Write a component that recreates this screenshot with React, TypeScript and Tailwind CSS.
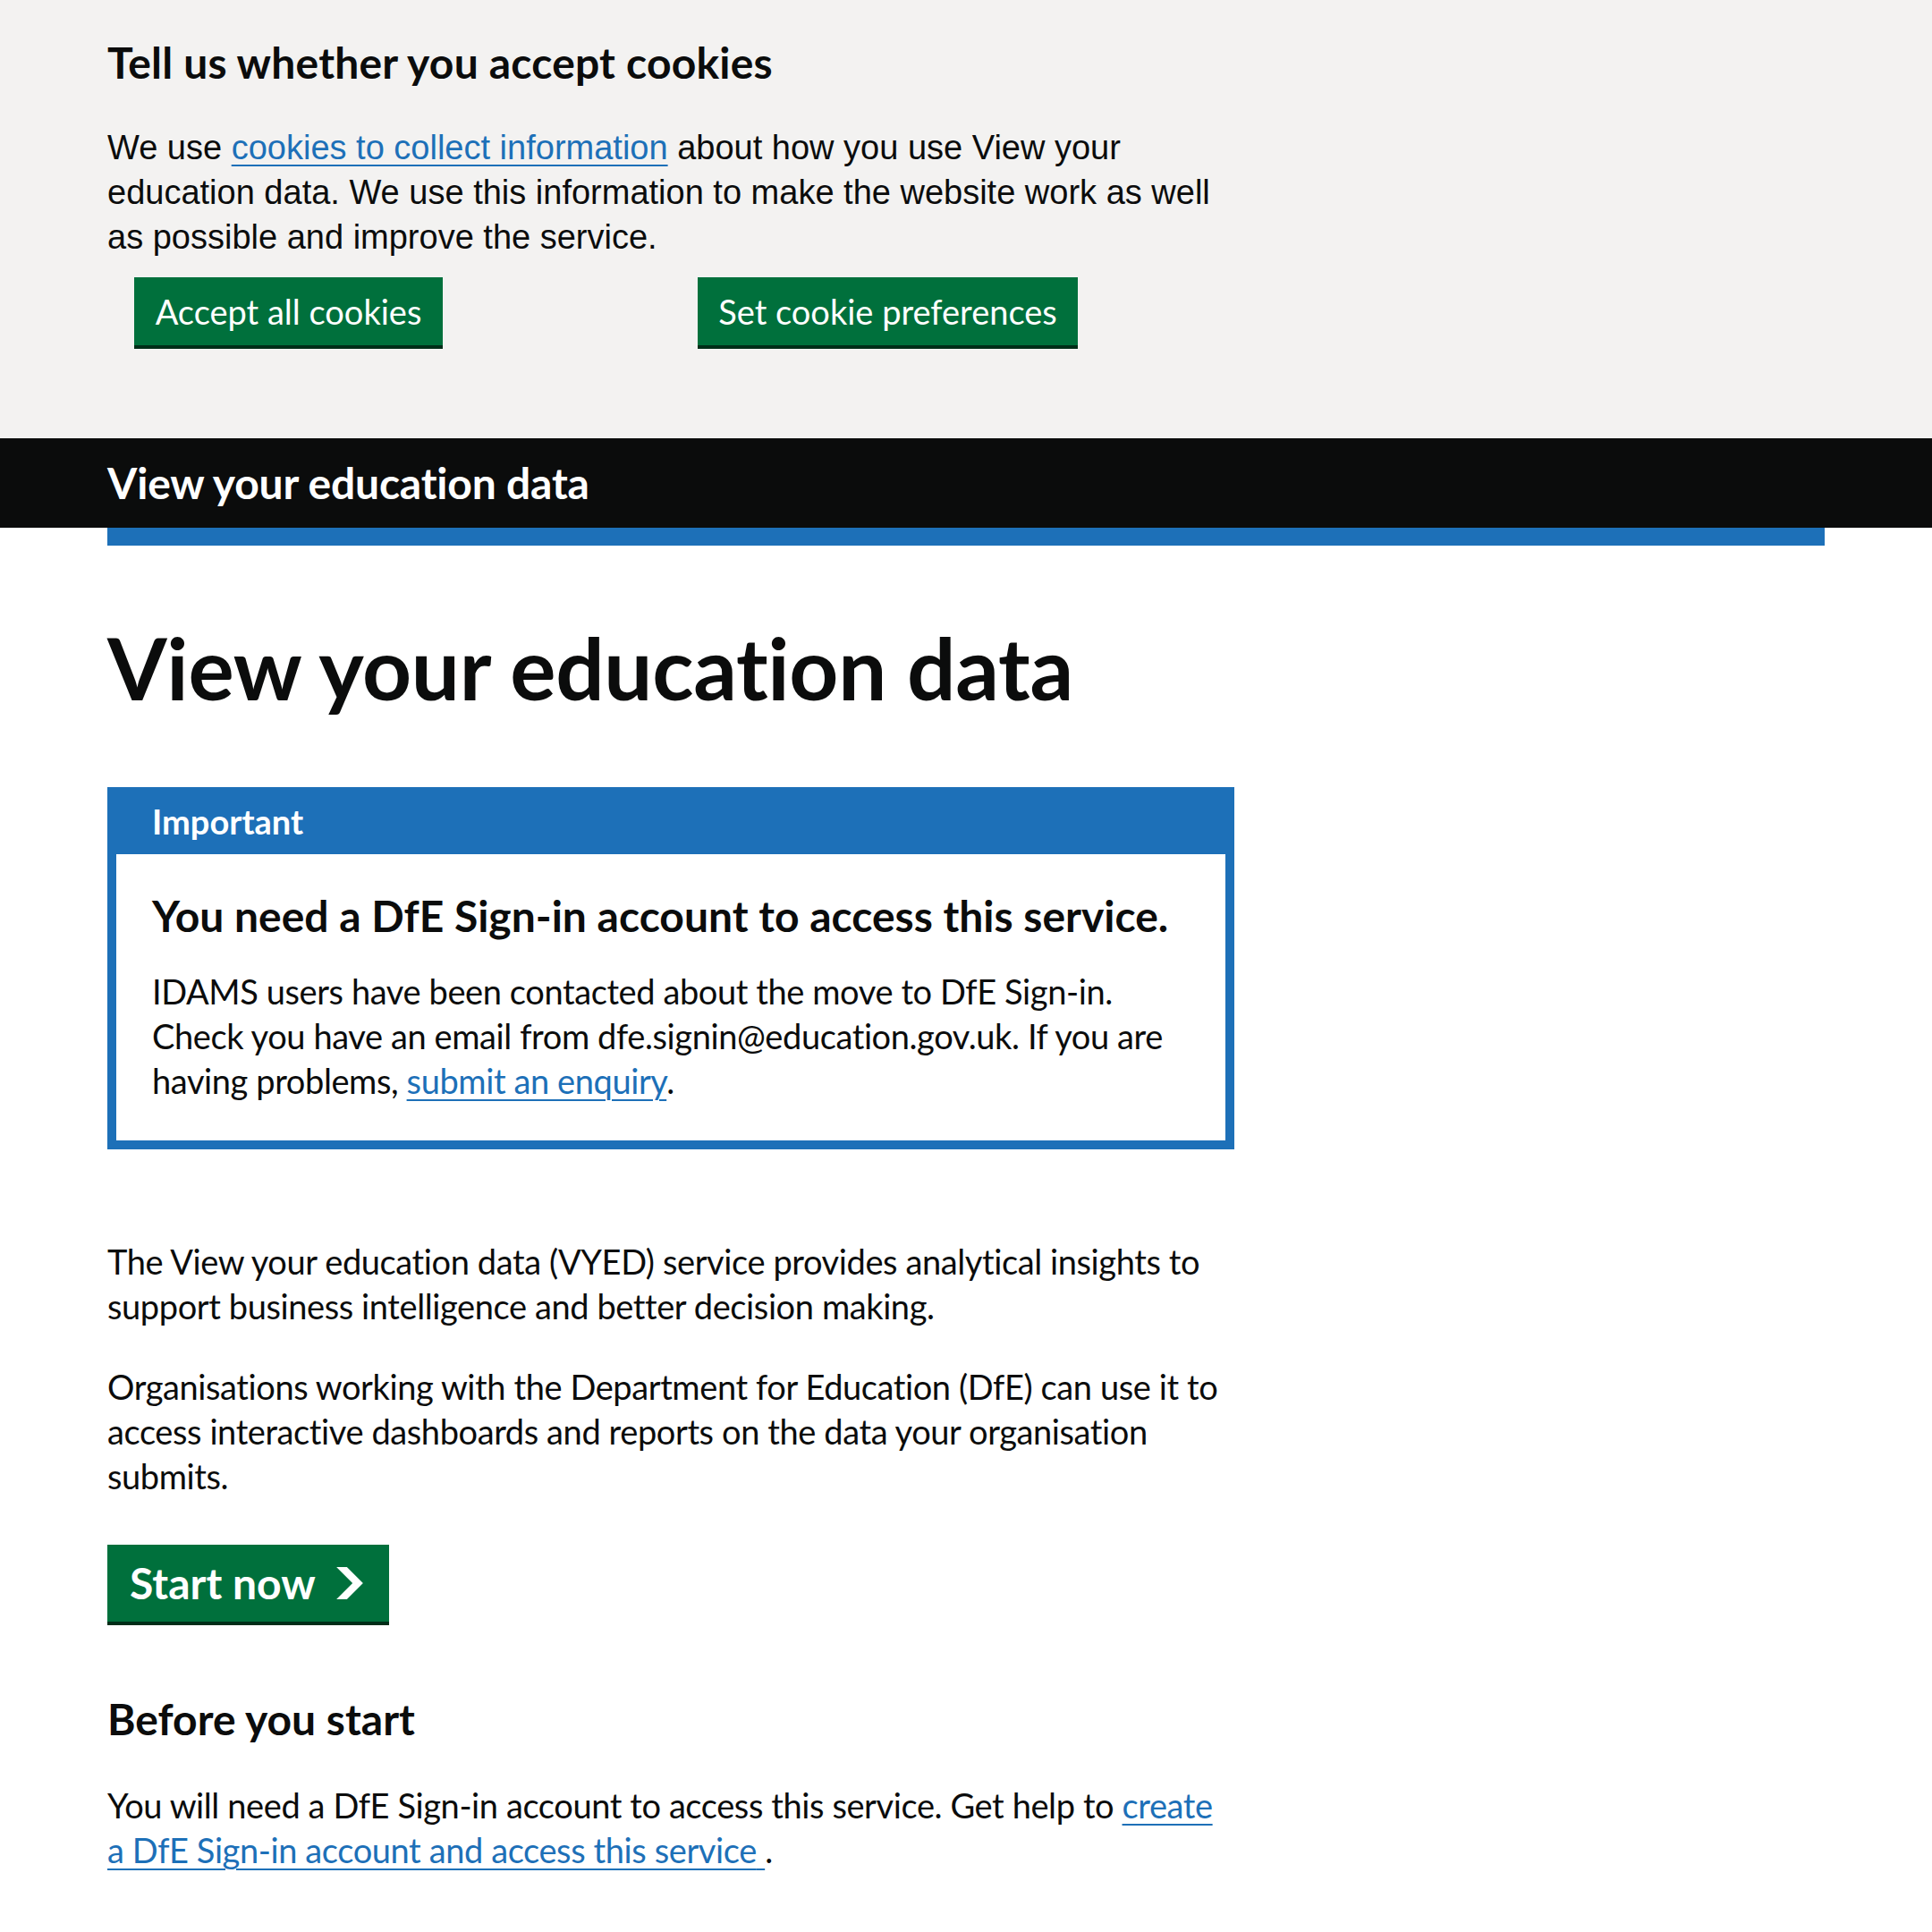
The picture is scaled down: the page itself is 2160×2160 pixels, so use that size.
import React from "react";

const linkCls =
  "text-[#1d70b8] underline decoration-[2px] underline-offset-[6px]";

export default function App() {
  return (
    <div className="min-h-[2160px] bg-white text-[#0b0c0c] font-['Lato',sans-serif]">
      {/* Cookie banner */}
      <div className="h-[490px] bg-[#f3f2f1]">
        <div className="mx-[120px] pt-[40px]">
          <h2 className="text-[48px] leading-[60px] font-bold tracking-[0.2px]">
            Tell us whether you accept cookies
          </h2>
          <p className="mt-[40px] text-[38px] leading-[50px] font-['Liberation_Sans',Arial,sans-serif]">
            We use{" "}
            <a href="#" className={linkCls}>
              cookies to collect information
            </a>{" "}
            about how you use View your
            <br />
            education data. We use this information to make the website work as well
            <br />
            as possible and improve the service.
          </p>
          <div className="mt-[20px] flex">
            <button className="ml-[30px] flex h-[76px] w-[345px] items-center justify-center bg-[#00703c] text-[38px] leading-none text-white shadow-[0_4px_0_#002d18]">
              Accept all cookies
            </button>
            <button className="ml-[285px] flex h-[76px] w-[425px] items-center justify-center bg-[#00703c] text-[38px] leading-none text-white shadow-[0_4px_0_#002d18]">
              Set cookie preferences
            </button>
          </div>
        </div>
      </div>

      {/* Header */}
      <header className="flex h-[100px] items-center bg-[#0b0c0c] px-[120px]">
        <span className="text-[48px] font-bold leading-none text-white tracking-[-0.2px]">
          View your education data
        </span>
      </header>
      <div className="mx-[120px] h-[20px] bg-[#1d70b8]" />

      {/* Main */}
      <main className="mx-[120px]">
        <h1 className="mt-[86px] text-[96px] font-bold leading-[100px] tracking-[-0.3px]">
          View your education data
        </h1>

        <div className="mt-[84px] w-[1260px] border-[10px] border-[#1d70b8] bg-[#1d70b8]">
          <div className="px-[40px] pb-[12px] pt-[3px] text-[38px] font-bold leading-[50px] text-white">
            Important
          </div>
          <div className="bg-white px-[40px] pb-[42px] pt-[39px]">
            <h3 className="text-[48px] font-bold leading-[60px]">
              You need a DfE Sign-in account to access this service.
            </h3>
            <p className="mt-[29px] text-[38px] leading-[50px] tracking-[-0.4px]">
              IDAMS users have been contacted about the move to DfE Sign-in.
              <br />
              Check you have an email from dfe.signin@education.gov.uk. If you are
              <br />
              having problems,{" "}
              <a href="#" className={linkCls}>
                submit an enquiry
              </a>
              .
            </p>
          </div>
        </div>

        <p className="mt-[100px] text-[38px] leading-[50px] tracking-[-0.4px]">
          The View your education data (VYED) service provides analytical insights to
          <br />
          support business intelligence and better decision making.
        </p>
        <p className="mt-[40px] text-[38px] leading-[50px] tracking-[-0.4px]">
          Organisations working with the Department for Education (DfE) can use it to
          <br />
          access interactive dashboards and reports on the data your organisation
          <br />
          submits.
        </p>

        <button className="mt-[52px] flex h-[86px] w-[315px] items-center bg-[#00703c] pl-[25px] text-[48px] font-bold leading-none text-white shadow-[0_4px_0_#002d18]">
          Start now
          <svg
            className="ml-[23px]"
            width="30"
            height="36"
            viewBox="0 0 33 40"
            aria-hidden="true"
          >
            <path fill="currentColor" d="M0 0h13l20 20-20 20H0l20-20z" />
          </svg>
        </button>

        <h2 className="mt-[79px] text-[48px] font-bold leading-[60px]">
          Before you start
        </h2>
        <p className="mt-[41px] text-[38px] leading-[50px] tracking-[-0.4px]">
          You will need a DfE Sign-in account to access this service. Get help to{" "}
          <a href="#" className={linkCls}>
            create
            <br />a DfE Sign-in account and access this service{" "}
          </a>
          .
        </p>
      </main>
    </div>
  );
}
